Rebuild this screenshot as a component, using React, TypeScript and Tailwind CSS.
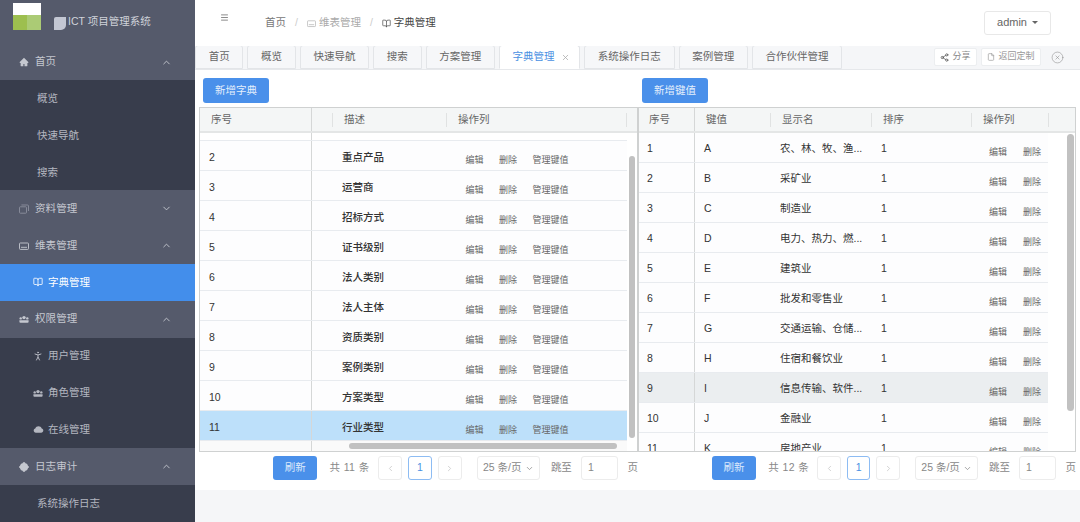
import { ChevronDown, ChevronLeft, ChevronRight, ChevronUp, BookOpen, PersonStanding, Menu, X, CircleX, Share2, File } from 'lucide-react';
import { AiFillHome, AiFillCloud } from 'react-icons/ai';

const tabs = ['首页', '概览', '快速导航', '搜索', '方案管理', '字典管理', '系统操作日志', '案例管理', '合作伙伴管理'];

const dictRows = [
  ['2', '重点产品'],
  ['3', '运营商'],
  ['4', '招标方式'],
  ['5', '证书级别'],
  ['6', '法人类别'],
  ['7', '法人主体'],
  ['8', '资质类别'],
  ['9', '案例类别'],
  ['10', '方案类型'],
  ['11', '行业类型'],
];

const keyRows = [
  ['1', 'A', '农、林、牧、渔...'],
  ['2', 'B', '采矿业'],
  ['3', 'C', '制造业'],
  ['4', 'D', '电力、热力、燃...'],
  ['5', 'E', '建筑业'],
  ['6', 'F', '批发和零售业'],
  ['7', 'G', '交通运输、仓储...'],
  ['8', 'H', '住宿和餐饮业'],
  ['9', 'I', '信息传输、软件...'],
  ['10', 'J', '金融业'],
  ['11', 'K', '房地产业'],
];

// icons the packages don't have in this shape
function TeamIcon() {
  return (
    <svg width="10" height="9" viewBox="0 0 10 9" fill="currentColor">
      <circle cx="5" cy="2.6" r="1.7" />
      <circle cx="1.7" cy="3.4" r="1.2" />
      <circle cx="8.3" cy="3.4" r="1.2" />
      <path d="M0.4 5.2h9.2v1.6q0 1-1 1H1.4q-1 0-1-1z" />
    </svg>
  );
}

function BoardIcon({ size = 10 }: { size?: number }) {
  return (
    <svg width={size} height={size} viewBox="0 0 10 10" fill="none" stroke="currentColor" strokeWidth="0.9">
      <rect x="0.5" y="2" width="9" height="6.4" rx="0.8" />
      <path d="M2 6.3h6" />
    </svg>
  );
}

function StackIcon() {
  return (
    <svg width="10" height="10" viewBox="0 0 10 10" fill="none" stroke="currentColor" strokeWidth="0.9">
      <rect x="0.5" y="2.8" width="7" height="6.4" rx="0.8" />
      <path d="M2.4 1h6.1q1 0 1 1v5" />
    </svg>
  );
}

function AuditIcon() {
  return (
    <svg width="10" height="10" viewBox="0 0 10 10" fill="currentColor">
      <circle cx="5" cy="5" r="4.1" />
      <path d="M3.9 0.3h2.2v1.5H3.9zM3.9 8.2h2.2v1.5H3.9zM0.3 3.9h1.5v2.2H0.3zM8.2 3.9h1.5v2.2H8.2z" />
    </svg>
  );
}

function Group({ icon, label, open, nudge }: { icon: React.ReactNode; label: string; open?: boolean; nudge?: boolean }) {
  const Chevron = open ? ChevronUp : ChevronDown;
  return (
    <div className={`h-[37px] flex items-center pl-[19px] pr-[23px] text-[10.5px] text-[#c5c8d0] bg-[#555a6b] ${nudge ? 'pt-[2px]' : ''}`}>
      <span className="w-[16px] flex">{icon}</span>
      <span className="flex-1 tracking-[0.1px]">{label}</span>
      <Chevron size={11} strokeWidth={2} />
    </div>
  );
}

function SubItem({ icon, label, active, nudge }: { icon?: React.ReactNode; label: string; active?: boolean; nudge?: boolean }) {
  return (
    <div
      className={`h-[37px] flex items-center text-[10.5px] ${icon ? 'pl-[33px]' : 'pl-[37px]'} ${nudge ? 'pt-[2px]' : ''} ${
        active ? 'bg-[#438eeb] text-white' : 'bg-[#383d4c] text-[#b4b7c0]'
      }`}
    >
      {icon && <span className="w-[15px] flex">{icon}</span>}
      <span>{label}</span>
    </div>
  );
}

function Sidebar() {
  return (
    <div className="w-[195px] shrink-0 bg-[#555a6b] flex flex-col h-[522px] overflow-hidden">
      <div className="h-[43px] flex items-start pl-[13px] pt-[3px] relative">
        <div className="w-[28px] h-[27px] flex flex-col">
          <div className="h-[12px] bg-white" />
          <div className="flex-1 flex">
            <div className="flex-1 bg-[#9dbf4f]" />
            <div className="flex-1 bg-[#abcb75]" />
          </div>
        </div>
        <div className="w-[12px] h-[13px] bg-[#c3c7d3] rounded-br-[5px] rounded-tl-[2px] ml-[13px] mt-[14px]" />
        <div className="ml-[2px] mt-[11px] text-[10.5px] text-[#d0d3da]">ICT 项目管理系统</div>
      </div>
      <Group nudge icon={<AiFillHome size={10} />} label="首页" open />
      <SubItem nudge label="概览" />
      <SubItem nudge label="快速导航" />
      <SubItem nudge label="搜索" />
      <Group icon={<span className="text-[#8c909e] flex"><StackIcon /></span>} label="资料管理" />
      <Group icon={<BoardIcon />} label="维表管理" open />
      <SubItem active icon={<BookOpen size={10} />} label="字典管理" />
      <Group icon={<TeamIcon />} label="权限管理" open />
      <SubItem icon={<PersonStanding size={12} className="-ml-[1px]" />} label="用户管理" />
      <SubItem icon={<TeamIcon />} label="角色管理" />
      <SubItem icon={<AiFillCloud size={11} />} label="在线管理" />
      <Group icon={<AuditIcon />} label="日志审计" open />
      <SubItem label="系统操作日志" />
    </div>
  );
}

function Header() {
  return (
    <div className="h-[46px] bg-white flex items-center relative">
      <Menu size={9} className="absolute left-[25px] top-[13px] text-[#666]" />
      <div className="ml-[70px] flex items-center text-[10.5px] text-[#777]">
        <span>首页</span>
        <span className="mx-[9px] text-[#ccc]">/</span>
        <span className="text-[#bbb] mr-[3px] flex"><BoardIcon size={9} /></span>
        <span className="text-[#aaa]">维表管理</span>
        <span className="mx-[9px] text-[#ccc]">/</span>
        <BookOpen size={9} className="text-[#555] mr-[3px]" />
        <span className="text-[#444]">字典管理</span>
      </div>
      <div className="ml-auto mr-[29px] mb-[1px] w-[67px] h-[24px] border border-[#e8e8e8] rounded-[3px] flex items-center justify-center gap-[5px] text-[11px] text-[#666]">
        admin
        <span className="w-0 h-0 border-x-[3px] border-x-transparent border-t-[3px] border-t-[#666]" />
      </div>
    </div>
  );
}

function TabBar() {
  return (
    <div className="h-[24px] bg-[#f5f6f8] border-b border-[#e6e8eb] flex items-end">
      <div className="flex gap-[4px] h-[24px]">
        {tabs.map((tab) => {
          const active = tab === '字典管理';
          return (
            <div
              key={tab}
              className={`h-[24px] pl-[12.7px] flex items-center gap-[6px] text-[10.5px] border border-[#e3e5e8] rounded-t-[3px] ${
                active ? 'pr-[9.6px] bg-white border-b-white text-[#4a90e2]' : 'pr-[12.7px] bg-[#f6f7f9] text-[#666]'
              }`}
            >
              {tab}
              {active && <X size={9} className="text-[#aaa]" />}
            </div>
          );
        })}
      </div>
      <div className="ml-auto flex items-center h-[24px] pr-[16px]">
        <div className="w-[43px] h-[18px] bg-white border border-[#eceef0] rounded-[2px] flex items-center justify-center gap-[3px] text-[9px] text-[#888]">
          <Share2 size={9} className="text-[#555]" />
          分享
        </div>
        <div className="ml-[4px] w-[60px] h-[18px] bg-white border border-[#eceef0] rounded-[2px] flex items-center justify-center gap-[3px] text-[9px] text-[#999]">
          <File size={8} />
          返回定制
        </div>
        <CircleX size={13} strokeWidth={1} className="ml-[10px] text-[#888]" />
      </div>
    </div>
  );
}

function PrimaryButton({ label }: { label: string }) {
  return (
    <div className="w-[66px] h-[25px] bg-[#4a90ea] rounded-[3px] flex items-center justify-center text-[10.5px] text-[#e4effc]">
      {label}
    </div>
  );
}

function Action({ label, className = '' }: { label: string; className?: string }) {
  return <span className={`text-[9px] text-[#666] ${className}`}>{label}</span>;
}

function Pagination({ total }: { total: number }) {
  return (
    <div className="h-[24px] mt-[4px] pl-[74px] flex items-center text-[10.5px] text-[#888] whitespace-nowrap">
      <div className="w-[45px] h-[24px] bg-[#4a90ea] rounded-[3px] flex items-center justify-center text-[#dce9fb]">刷新</div>
      <span className="ml-[12px] w-[38px] tracking-[0.4px]">共 {total} 条</span>
      <div className="ml-[11px] w-[24px] h-[24px] border border-[#ececec] rounded-[3px] flex items-center justify-center text-[#c4c4c4]">
        <ChevronLeft size={9} />
      </div>
      <div className="ml-[6px] w-[24px] h-[24px] border border-[#8dbcf3] rounded-[3px] flex items-center justify-center text-[#4a90e2]">1</div>
      <div className="ml-[6px] w-[24px] h-[24px] border border-[#ececec] rounded-[3px] flex items-center justify-center text-[#c4c4c4]">
        <ChevronRight size={9} />
      </div>
      <div className="ml-[15px] w-[64px] h-[24px] border border-[#ececec] rounded-[3px] flex items-center justify-center gap-[3px]">
        25 条/页
        <ChevronDown size={9} />
      </div>
      <span className="ml-[11px]">跳至</span>
      <div className="ml-[9px] w-[37px] h-[24px] border border-[#ececec] rounded-[3px] flex items-center pl-[6px]">1</div>
      <span className="ml-[10px]">页</span>
    </div>
  );
}

function HeaderCell({ label, indent, divider = true }: { label?: string; indent: string; divider?: boolean }) {
  return (
    <div className={`h-full flex items-center pt-[1px] ${indent} relative`}>
      {label}
      {divider && <span className="absolute right-0 top-[5px] h-[14px] w-px bg-[#e0e2e2]" />}
    </div>
  );
}

function DictTable() {
  const cols = 'grid grid-cols-[112px_21px_114px_180px]';
  return (
    <div className="h-[345px] border border-[#cfd1d1] relative overflow-hidden">
      <div className={`${cols} h-[25px] bg-[#f4f6f6] border-b-2 border-[#e4e6e6] text-[10.5px] text-[#666]`}>
        <div className="h-full flex items-center pt-[1px] pl-[11px] border-r border-[#d5d7d7]">序号</div>
        <HeaderCell indent="" />
        <HeaderCell label="描述" indent="pl-[11px]" />
        <HeaderCell label="操作列" indent="pl-[11px]" />
      </div>
      <div className="w-[427px]">
        <div className="h-[8px] border-b border-[#e8ebef]">
          <div className="w-[112px] h-full border-r border-[#d5d7d7]" />
        </div>
        {dictRows.map(([no, name]) => (
          <div
            key={no}
            className={`${cols} h-[30px] border-b border-[#e8ebef] text-[10.5px] text-[#333] ${no === '11' ? 'bg-[#bde0fa]' : 'bg-[#fdfdfe]'}`}
          >
            <div className="flex items-center pt-[4px] pl-[9px] border-r border-[#d5d7d7]">{no}</div>
            <div />
            <div className="flex items-center pt-[4px] pl-[9px] font-medium">{name}</div>
            <div className="flex items-center pl-[18.5px] pt-[10px] whitespace-nowrap">
              <Action label="编辑" />
              <Action label="删除" className="ml-[15.5px]" />
              <Action label="管理键值" className="ml-[15.5px]" />
            </div>
          </div>
        ))}
        <div className="h-[10px] bg-[#fafafa]">
          <div className="w-[112px] h-full border-r border-[#d5d7d7]" />
        </div>
      </div>
      {/* scrollbars */}
      <div className="absolute left-[429px] top-[48px] w-[6px] h-[282px] rounded-full bg-[#c1c1c1]" />
      <div className="absolute left-[149px] top-[335px] w-[268px] h-[6px] rounded-full bg-[#c1c1c1]" />
    </div>
  );
}

function KeyTable() {
  const cols = 'grid grid-cols-[56px_76px_101px_100px_77px]';
  return (
    <div className="h-[345px] border border-[#cfd1d1] relative overflow-hidden">
      <div className="grid grid-cols-[56px_76px_101px_100px_77px_1fr] h-[25px] bg-[#f4f6f6] border-b-2 border-[#e4e6e6] text-[10.5px] text-[#666]">
        <div className="h-full flex items-center pt-[1px] pl-[10px] border-r border-[#d5d7d7]">序号</div>
        <HeaderCell label="键值" indent="pl-[11px]" />
        <HeaderCell label="显示名" indent="pl-[11px]" />
        <HeaderCell label="排序" indent="pl-[11px]" />
        <HeaderCell label="操作列" indent="pl-[11px]" />
      </div>
      <div className="w-[409px]">
        {keyRows.map(([no, key, name]) => (
          <div
            key={no}
            className={`${cols} h-[30px] border-b border-[#e8ebef] text-[10.5px] text-[#333] ${no === '9' ? 'bg-[#ebeef0]' : 'bg-[#fdfdfe]'}`}
          >
            <div className="flex items-center pt-[3px] pl-[8px] border-r border-[#d5d7d7]">{no}</div>
            <div className="flex items-center pt-[3px] pl-[9px]">{key}</div>
            <div className="flex items-center pt-[3px] pl-[9px] whitespace-nowrap">{name}</div>
            <div className="flex items-center pt-[3px] pl-[9px]">1</div>
            <div className="flex items-center pl-[17px] pt-[10px] whitespace-nowrap">
              <Action label="编辑" />
              <Action label="删除" className="ml-[16px]" />
            </div>
          </div>
        ))}
      </div>
      <div className="absolute left-[428px] top-[26px] w-[7px] h-[277px] rounded-full bg-[#c1c1c1]" />
    </div>
  );
}

export default function App() {
  return (
    <div className="w-[1080px] h-[522px] flex overflow-hidden bg-[#f5f6f8] font-['Liberation_Sans','Noto_Sans_CJK_SC',sans-serif]">
      <Sidebar />
      <div className="flex-1 min-w-0 flex flex-col">
        <Header />
        <TabBar />
        <div className="h-[420px] bg-white pl-[4px] grid grid-cols-[439px_438px]">
          <div>
            <div className="pl-[4px] pt-[8px] pb-[4px]">
              <PrimaryButton label="新增字典" />
            </div>
            <DictTable />
            <Pagination total={11} />
          </div>
          <div>
            <div className="pl-[4px] pt-[8px] pb-[4px]">
              <PrimaryButton label="新增键值" />
            </div>
            <KeyTable />
            <Pagination total={12} />
          </div>
        </div>
      </div>
    </div>
  );
}
